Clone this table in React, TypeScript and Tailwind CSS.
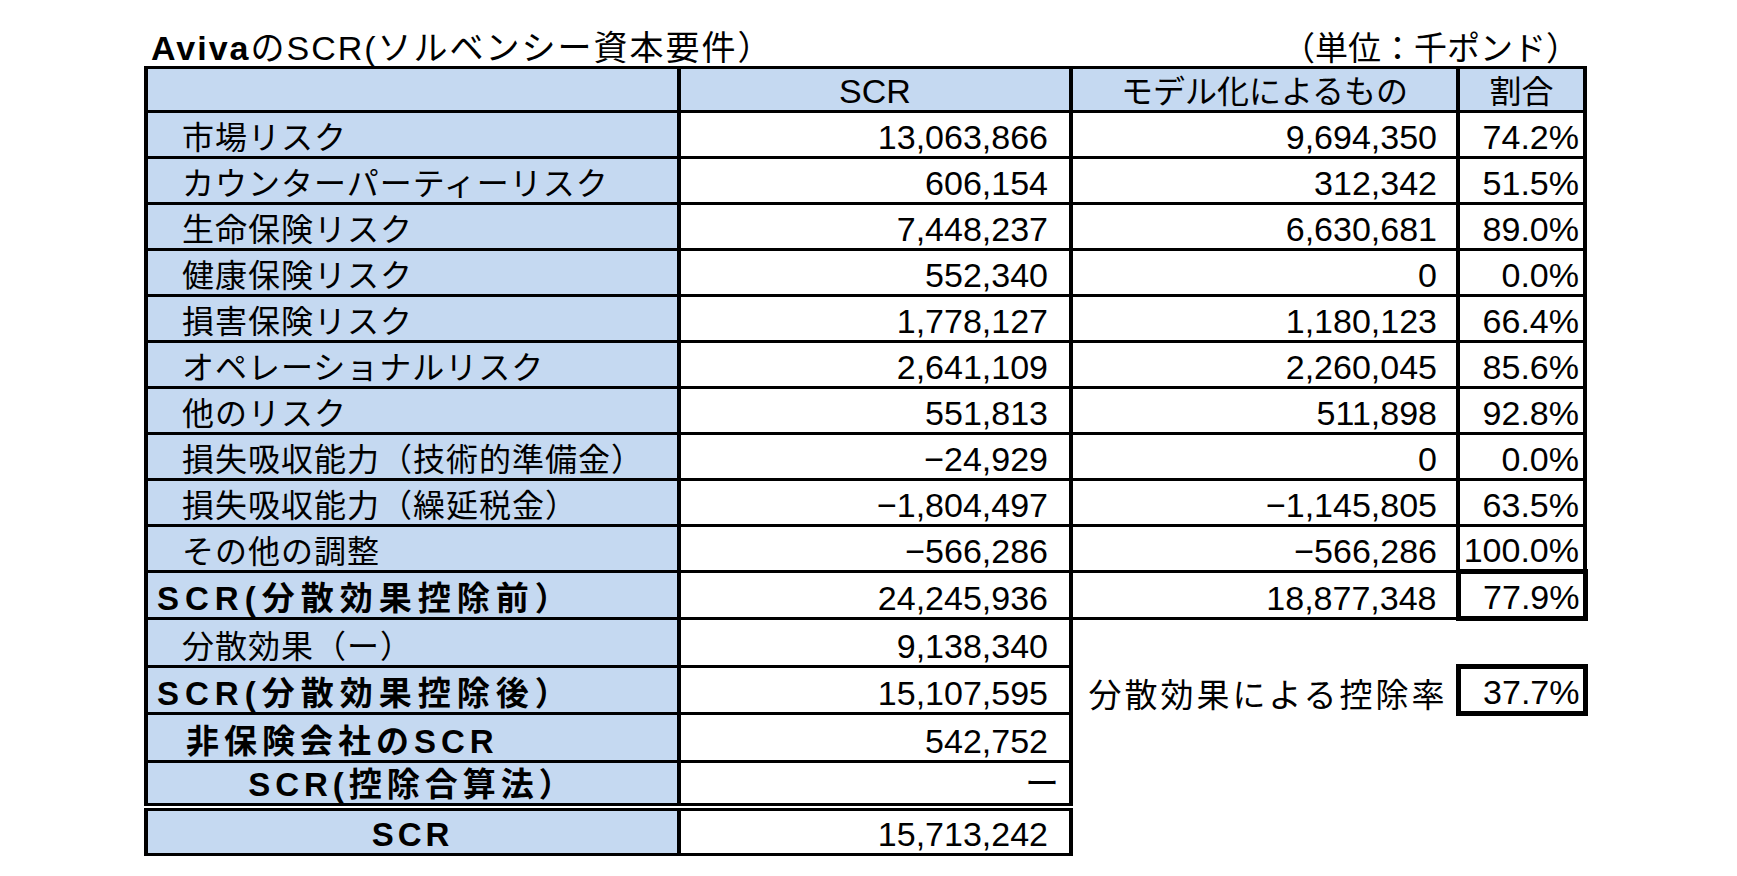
import React from "react";

const JP = { fontFamily: '"Liberation Sans", "Noto Sans CJK JP", sans-serif' };
const NUM = { fontFamily: '"Liberation Sans", "Noto Sans CJK JP", sans-serif' };

const labelBase =
  "border-y-[3px] border-x-[4px] border-black bg-[#c5d9f1] align-bottom leading-none pb-[2px] text-[32px] whitespace-nowrap overflow-hidden";
const numBase =
  "border-y-[3px] border-x-[4px] border-black align-bottom text-right leading-none pb-[2px] text-[34px] whitespace-nowrap";

type Row = { label: string; scr: string; model: string; pct: string };

const rows: Row[] = [
  { label: "市場リスク", scr: "13,063,866", model: "9,694,350", pct: "74.2%" },
  { label: "カウンターパーティーリスク", scr: "606,154", model: "312,342", pct: "51.5%" },
  { label: "生命保険リスク", scr: "7,448,237", model: "6,630,681", pct: "89.0%" },
  { label: "健康保険リスク", scr: "552,340", model: "0", pct: "0.0%" },
  { label: "損害保険リスク", scr: "1,778,127", model: "1,180,123", pct: "66.4%" },
  { label: "オペレーショナルリスク", scr: "2,641,109", model: "2,260,045", pct: "85.6%" },
  { label: "他のリスク", scr: "551,813", model: "511,898", pct: "92.8%" },
  { label: "損失吸収能力（技術的準備金）", scr: "−24,929", model: "0", pct: "0.0%" },
  { label: "損失吸収能力（繰延税金）", scr: "−1,804,497", model: "−1,145,805", pct: "63.5%" },
  { label: "その他の調整", scr: "−566,286", model: "−566,286", pct: "100.0%" },
];

export default function App() {
  return (
    <div className="w-[1737px] h-[876px] bg-white text-black" style={JP}>
      <div className="pl-[144px]">
        <div className="w-[1439px] h-[66px] flex items-end justify-between">
          <div className="pl-[7px] text-[34px] leading-none pb-[1px] whitespace-nowrap tracking-[2px]">
            <span className="font-bold">Aviva</span>のSCR(ソルベンシー資本要件）
          </div>
          <div className="text-[33px] leading-none pb-[1px] pr-[4px] whitespace-nowrap">
            （単位：千ポンド）
          </div>
        </div>
        <table className="border-collapse table-fixed w-[1439px]">
          <colgroup>
            <col className="w-[533px]" />
            <col className="w-[392px]" />
            <col className="w-[387px]" />
            <col className="w-[127px]" />
          </colgroup>
          <tbody>
            <tr className="h-[44px]">
              <td className={labelBase}></td>
              <td className={labelBase + " text-center text-[34px]"} style={NUM}>SCR</td>
              <td className={labelBase + " text-center"}>モデル化によるもの</td>
              <td className={labelBase + " text-center"}>割合</td>
            </tr>
            {rows.map((r) => (
              <tr key={r.label} className="h-[46px]">
                <td className={labelBase + " pl-[34px] tracking-[1px]"}>{r.label}</td>
                <td className={numBase + " pr-[21px]"} style={NUM}>{r.scr}</td>
                <td className={numBase + " pr-[19px]"} style={NUM}>{r.model}</td>
                <td className={numBase + " pr-[4px]"} style={NUM}>{r.pct}</td>
              </tr>
            ))}
            <tr className="h-[47px]">
              <td className={labelBase + " pl-[9px] font-bold text-[33px] tracking-[6px]"}>SCR(分散効果控除前）</td>
              <td className={numBase + " pr-[21px]"} style={NUM}>24,245,936</td>
              <td className={numBase + " pr-[19px]"} style={NUM}>18,877,348</td>
              <td className={numBase + " border-y-[5px] border-x-[5px] pr-[3px]"} style={NUM}>77.9%</td>
            </tr>
            <tr className="h-[48px]">
              <td className={labelBase + " pl-[34px] tracking-[1px]"}>分散効果（ー）</td>
              <td className={numBase + " pr-[21px]"} style={NUM}>9,138,340</td>
              <td></td>
              <td></td>
            </tr>
            <tr className="h-[47px]">
              <td className={labelBase + " pl-[9px] font-bold text-[33px] tracking-[6px]"}>SCR(分散効果控除後）</td>
              <td className={numBase + " pr-[21px]"} style={NUM}>15,107,595</td>
              <td className="align-bottom text-right leading-none pb-[2px] pr-[8px] text-[33px] whitespace-nowrap tracking-[3px]">
                分散効果による控除率
              </td>
              <td className={numBase + " border-y-[5px] border-x-[5px] pr-[3px]"} style={NUM}>37.7%</td>
            </tr>
            <tr className="h-[48px]">
              <td className={labelBase + " pl-[38px] font-bold text-[33px] tracking-[5px]"}>非保険会社のSCR</td>
              <td className={numBase + " pr-[21px]"} style={NUM}>542,752</td>
              <td></td>
              <td></td>
            </tr>
            <tr className="h-[45px]">
              <td className={labelBase + " text-center font-bold text-[33px] tracking-[5px]"}>SCR(控除合算法）</td>
              <td className={numBase + " pr-[10px]"}>ー</td>
              <td></td>
              <td></td>
            </tr>
            <tr className="h-[48px]">
              <td className={labelBase + " text-center font-bold text-[33px] tracking-[4px] border-t-[8px] [border-top-style:double]"}>SCR</td>
              <td className={numBase + " pr-[21px] border-t-[8px] [border-top-style:double]"} style={NUM}>15,713,242</td>
              <td></td>
              <td></td>
            </tr>
          </tbody>
        </table>
      </div>
    </div>
  );
}
